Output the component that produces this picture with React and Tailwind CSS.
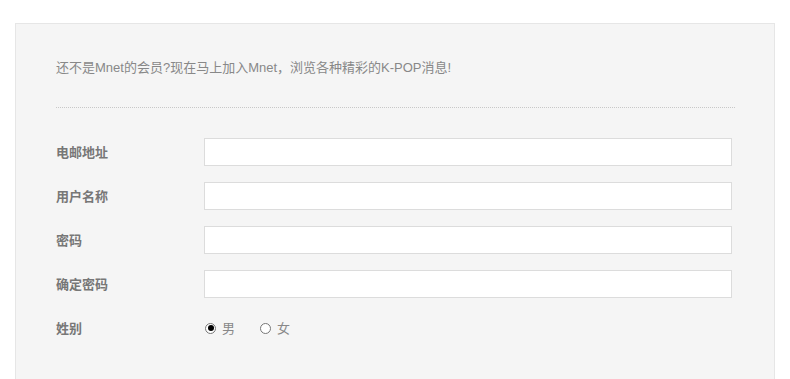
import React, { useState } from 'react';

const fields = [
  { label: '电邮地址', type: 'text' },
  { label: '用户名称', type: 'text' },
  { label: '密码', type: 'password' },
  { label: '确定密码', type: 'password' },
];

const Radio = ({ checked, label, onClick }) => (
  <button onClick={onClick} className="flex items-center gap-[6px] text-[13px] text-[#888]">
    <span className="flex w-[11px] h-[11px] items-center justify-center rounded-full border border-[#777] bg-white">
      {checked && <span className="w-[6px] h-[6px] rounded-full bg-black" />}
    </span>
    <span>{label}</span>
  </button>
);

export default function App() {
  const [gender, setGender] = useState('m');

  return (
    <div
      className="h-[379px] overflow-hidden bg-white pt-[23px] pl-[15px]"
      style={{ fontFamily: '"Noto Sans CJK SC", "Liberation Sans", sans-serif' }}
    >
      <div className="w-[760px] h-[400px] bg-[#f5f5f5] border border-[#e6e6e6] pl-[40px] pt-[34px]">
        {/* 头部说明 */}
        <p
          className="text-[13px] leading-[20px] text-[#888]"
          style={{ fontFamily: '"Liberation Sans", "Noto Sans CJK SC", sans-serif' }}
        >
          还不是Mnet的会员?现在马上加入Mnet，浏览各种精彩的K-POP消息!
        </p>
        <div className="w-[679px] mt-[29px] border-t border-dotted border-[#c8c8c8]" />

        {/* 表单 */}
        <div className="mt-[30px] flex flex-col gap-[16px]">
          {fields.map((f) => (
            <div key={f.label} className="flex items-center h-[28px]">
              <label className="w-[148px] text-[13px] font-bold text-[#777]">{f.label}</label>
              <input
                type={f.type}
                className="w-[528px] h-[28px] bg-white border border-[#dcdcdc] outline-none px-2"
              />
            </div>
          ))}
          <div className="flex items-center h-[28px]">
            <label className="w-[149px] text-[13px] font-bold text-[#777]">姓别</label>
            <div className="flex items-center gap-[25px]">
              <Radio checked={gender === 'm'} label="男" onClick={() => setGender('m')} />
              <Radio checked={gender === 'f'} label="女" onClick={() => setGender('f')} />
            </div>
          </div>
        </div>
      </div>
    </div>
  );
}
